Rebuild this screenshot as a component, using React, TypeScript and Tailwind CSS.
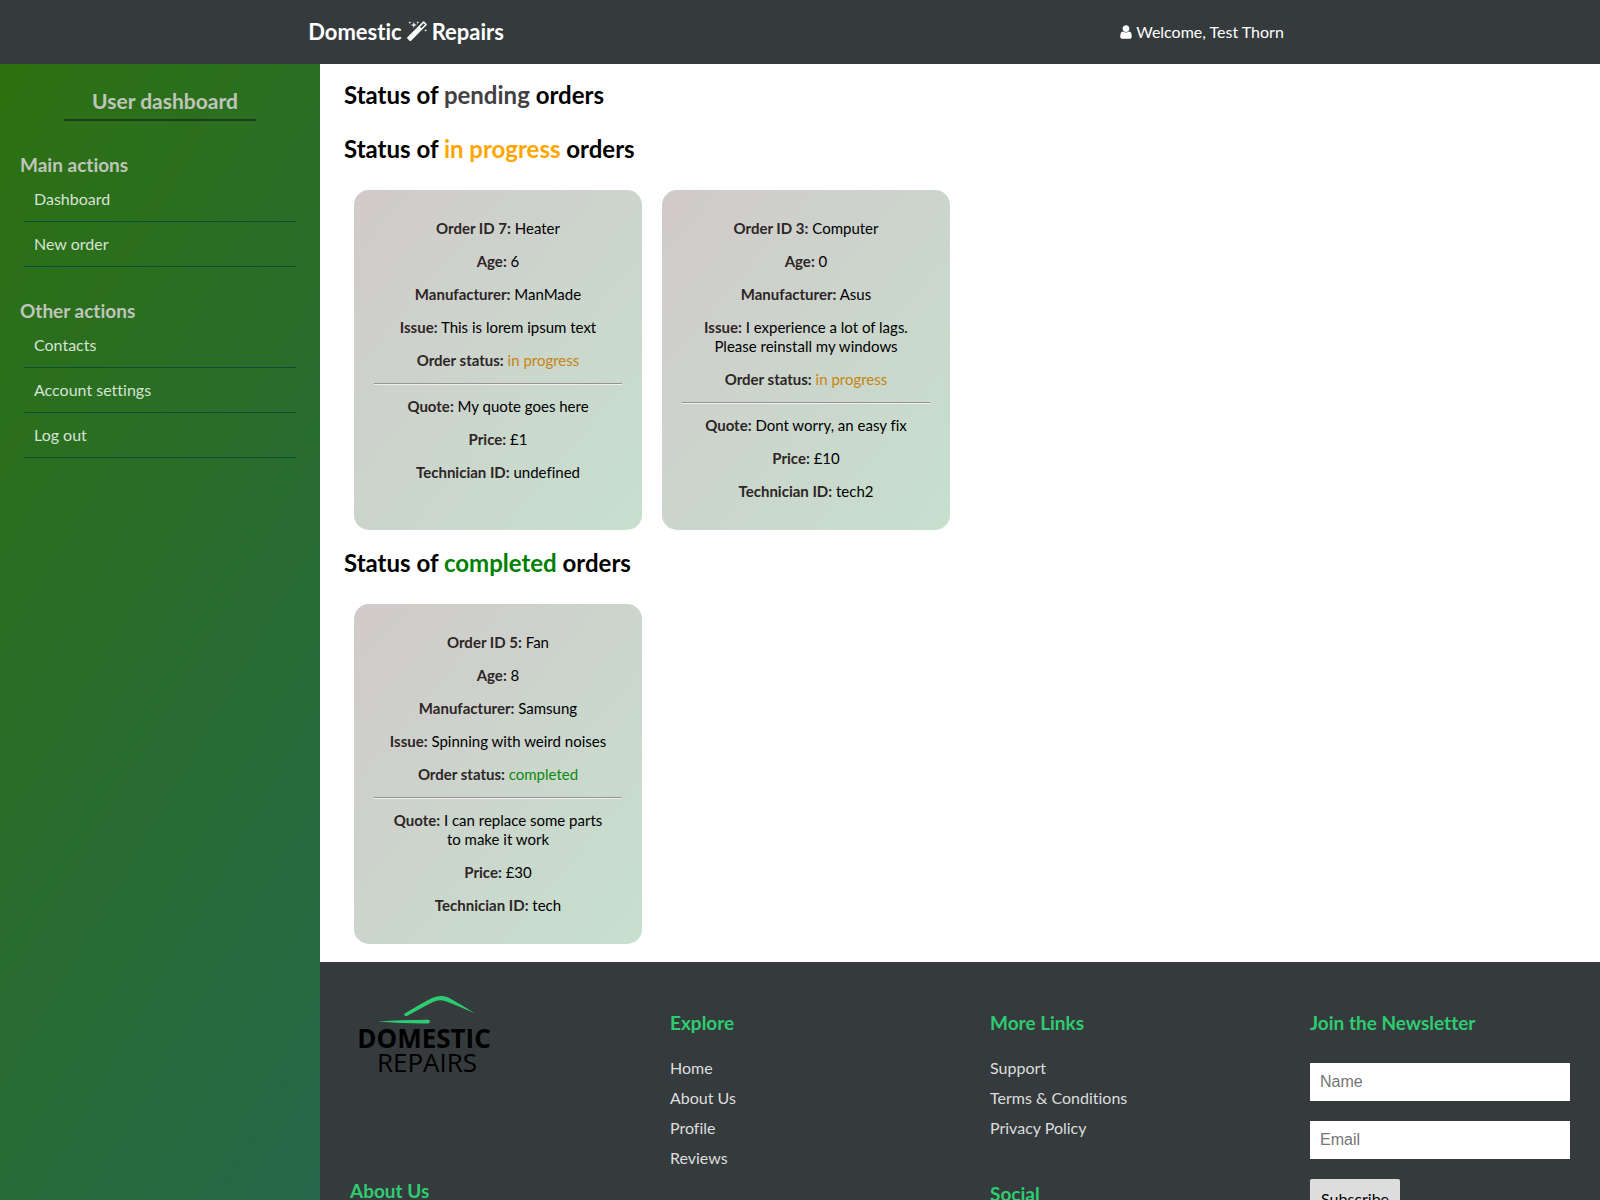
import React from "react";

type Order = {
  id: number;
  device: string;
  age: number;
  maker: string;
  issue: string;
  status: string;
  quote: string;
  price: string;
  technician: string;
};

const inProgress: Order[] = [
  { id: 7, device: "Heater", age: 6, maker: "ManMade", issue: "This is lorem ipsum text", status: "in progress", quote: "My quote goes here", price: "£1", technician: "undefined" },
  { id: 3, device: "Computer", age: 0, maker: "Asus", issue: "I experience a lot of lags. Please reinstall my windows", status: "in progress", quote: "Dont worry, an easy fix", price: "£10", technician: "tech2" },
];

const completed: Order[] = [
  { id: 5, device: "Fan", age: 8, maker: "Samsung", issue: "Spinning with weird noises", status: "completed", quote: "I can replace some parts to make it work", price: "£30", technician: "tech" },
];

function MagicIcon() {
  return (
    <svg viewBox="0 0 1792 1792" className="size-[22px] fill-current" aria-hidden="true">
      <path d="M1254 581l293-293-107-107-293 293zm447-293q0 27-18 45l-1286 1286q-18 18-45 18t-45-18l-198-198q-18-18-18-45t18-45l1286-1286q18-18 45-18t45 18l198 198q18 18 18 45zm-1351-190l98 30-98 30-30 98-30-98-98-30 98-30 30-98zm350 162l196 60-196 60-60 196-60-196-196-60 196-60 60-196zm930 478l98 30-98 30-30 98-30-98-98-30 98-30 30-98zm-640-640l98 30-98 30-30 98-30-98-98-30 98-30 30-98z" />
    </svg>
  );
}

function UserIcon() {
  return (
    <svg viewBox="256 0 1280 1792" className="h-4 w-3 fill-current" aria-hidden="true">
      <path d="M1536 1399q0 109-62.5 187t-150.5 78h-854q-88 0-150.5-78t-62.5-187q0-85 8.5-160.5t31.5-152 58.5-131 94-89 134.5-34.5q131 128 313 128t313-128q76 0 134.5 34.5t94 89 58.5 131 31.5 152 8.5 160.5zm-256-887q0 159-112.5 271.5t-271.5 112.5-271.5-112.5-112.5-271.5 112.5-271.5 271.5-112.5 271.5 112.5 112.5 271.5z" />
    </svg>
  );
}

function Logo() {
  return (
    <svg viewBox="0 0 150 100" className="h-[100px] w-[150px]" role="img" aria-label="Domestic Repairs">
      <path d="M54 22 Q72 11 82 6 Q90 2.500 97 5 Q103 7.500 125 21.500 Q105 12.500 95 9 Q89 7 83 10 Q74 14.500 57 24 Q54 24.500 54 22Z" fill="#2ecc71" />
      <path d="M28 29.500 Q50 27.800 78 27.800 Q80 28 80 29.500 Q80 31.200 78 31.400 Q50 31.500 28 29.500Z" fill="#2ecc71" />
      <text x="74" y="56" textAnchor="middle" className="font-['Open_Sans'] text-[26px] font-bold">DOMESTIC</text>
      <text x="77" y="80" textAnchor="middle" className="font-['Open_Sans'] text-[26px]">REPAIRS</text>
    </svg>
  );
}

function Field({ label, children }: { label: string; children: React.ReactNode }) {
  return (
    <p>
      <strong className="font-bold text-[#2e2626]">{label}:</strong> {children}
    </p>
  );
}

function OrderCard({ order }: { order: Order }) {
  return (
    <article className="w-72 rounded-[15px] bg-linear-to-br/srgb from-[#d1caca] to-[#c6e0ce] px-5 py-[29px] text-center text-[15px] leading-[19px]">
      <div className="flex flex-col gap-3.5 px-3">
        <Field label={`Order ID ${order.id}`}>{order.device}</Field>
        <Field label="Age">{order.age}</Field>
        <Field label="Manufacturer">{order.maker}</Field>
        <Field label="Issue">{order.issue}</Field>
        <Field label="Order status">
          <span className={order.status === "completed" ? "text-[#0d8a0d]" : "text-[#c78410]"}>{order.status}</span>
        </Field>
      </div>
      <hr className="mt-[13px] mb-3 border-t border-b border-t-[#979393] border-b-[#f2efef]" />
      <div className="flex flex-col gap-3.5 px-3">
        <Field label="Quote">{order.quote}</Field>
        <Field label="Price">{order.price}</Field>
        <Field label="Technician ID">{order.technician}</Field>
      </div>
    </article>
  );
}

function StatusHeading({ status, tone }: { status: string; tone: string }) {
  return (
    <h2 className="text-2xl leading-[30px] font-bold">
      Status of <span className={tone}>{status}</span> orders
    </h2>
  );
}

function SideMenu({ title, items }: { title: string; items: string[] }) {
  return (
    <section>
      <h3 className="pl-5 text-[19px] leading-6 font-bold text-[#c0c5bc]">{title}</h3>
      <ul className="mx-6">
        {items.map((item) => (
          <li key={item} className="border-b border-[#0c4f38]">
            <a href="#" className="block px-2.5 py-3 leading-5 text-[#d6e3d6]">{item}</a>
          </li>
        ))}
      </ul>
    </section>
  );
}

function FooterLinks({ title, items }: { title: string; items: string[] }) {
  return (
    <section>
      <h3 className="text-[19px] leading-6 font-bold text-[#2ecc71]">{title}</h3>
      <ul className="mt-[18px] text-[#dcdedf]">
        {items.map((item) => (
          <li key={item} className="leading-[30px]">
            <a href="#">{item}</a>
          </li>
        ))}
      </ul>
    </section>
  );
}

export default function App() {
  return (
    <div className="min-h-screen bg-white font-['Lato',sans-serif] text-base text-black [font-variant-ligatures:none]">
      <header className="sticky top-0 z-10 flex h-16 items-center justify-around bg-[#353a3c] pr-2 text-white">
        <a href="#" className="flex items-center gap-1 text-[22px] leading-7 font-bold">
          Domestic <MagicIcon /> Repairs
        </a>
        <p className="flex items-center gap-1">
          <UserIcon /> Welcome, Test Thorn
        </p>
      </header>
      <div className="flex items-start">
        <aside className="sticky top-16 h-[calc(100vh-4rem)] w-1/5 shrink-0 bg-linear-[120deg] from-[#2c7110] to-[#26674a]">
          <h2 className="mx-auto mt-6 w-3/5 border-b-2 border-[#1d3d1d] pb-1.5 pl-2.5 text-center text-[21px] leading-[25px] font-bold text-[#c0c5bc]">
            User dashboard
          </h2>
          <nav className="mt-8 flex flex-col gap-8">
            <SideMenu title="Main actions" items={["Dashboard", "New order"]} />
            <SideMenu title="Other actions" items={["Contacts", "Account settings", "Log out"]} />
          </nav>
        </aside>
        <div className="min-w-0 flex-1">
          <main className="px-6 pt-4 pb-[18px]">
            <StatusHeading status="pending" tone="text-[#434043]" />
            <div className="mt-6">
              <StatusHeading status="in progress" tone="text-[#ffa500]" />
            </div>
            <div className="mt-[26px] ml-2.5 flex flex-wrap gap-5">
              {inProgress.map((o) => <OrderCard key={o.id} order={o} />)}
            </div>
            <div className="mt-[18px]">
              <StatusHeading status="completed" tone="text-[#008000]" />
            </div>
            <div className="mt-[26px] ml-2.5 flex flex-wrap gap-5">
              {completed.map((o) => <OrderCard key={o.id} order={o} />)}
            </div>
          </main>
          <footer className="grid grid-cols-4 bg-[#353a3c] pb-8">
            <div className="px-[30px] pt-[30px]">
              <Logo />
              <h3 className="mt-[87px] text-[19px] leading-6 font-bold text-[#2ecc71]">About Us</h3>
            </div>
            <div className="px-[30px] pt-[49px]">
              <FooterLinks title="Explore" items={["Home", "About Us", "Profile", "Reviews"]} />
            </div>
            <div className="flex flex-col gap-[39px] px-[30px] pt-[49px]">
              <FooterLinks title="More Links" items={["Support", "Terms & Conditions", "Privacy Policy"]} />
              <h3 className="text-[19px] leading-6 font-bold text-[#2ecc71]">Social</h3>
            </div>
            <form className="px-[30px] pt-[49px]">
              <h3 className="text-[19px] leading-6 font-bold text-[#2ecc71]">Join the Newsletter</h3>
              <div className="mt-7 flex flex-col items-start gap-5">
                <input aria-label="Name" placeholder="Name" className="h-[38px] w-full bg-white px-2.5 font-['Liberation_Sans'] text-black placeholder:text-[#757575]" />
                <input aria-label="Email" type="email" placeholder="Email" className="h-[38px] w-full bg-white px-2.5 font-['Liberation_Sans'] text-black placeholder:text-[#757575]" />
                <button type="button" className="rounded-xs bg-[#dddddd] px-[11px] py-2.5 leading-5 text-black">Subscribe</button>
              </div>
            </form>
          </footer>
        </div>
      </div>
    </div>
  );
}
